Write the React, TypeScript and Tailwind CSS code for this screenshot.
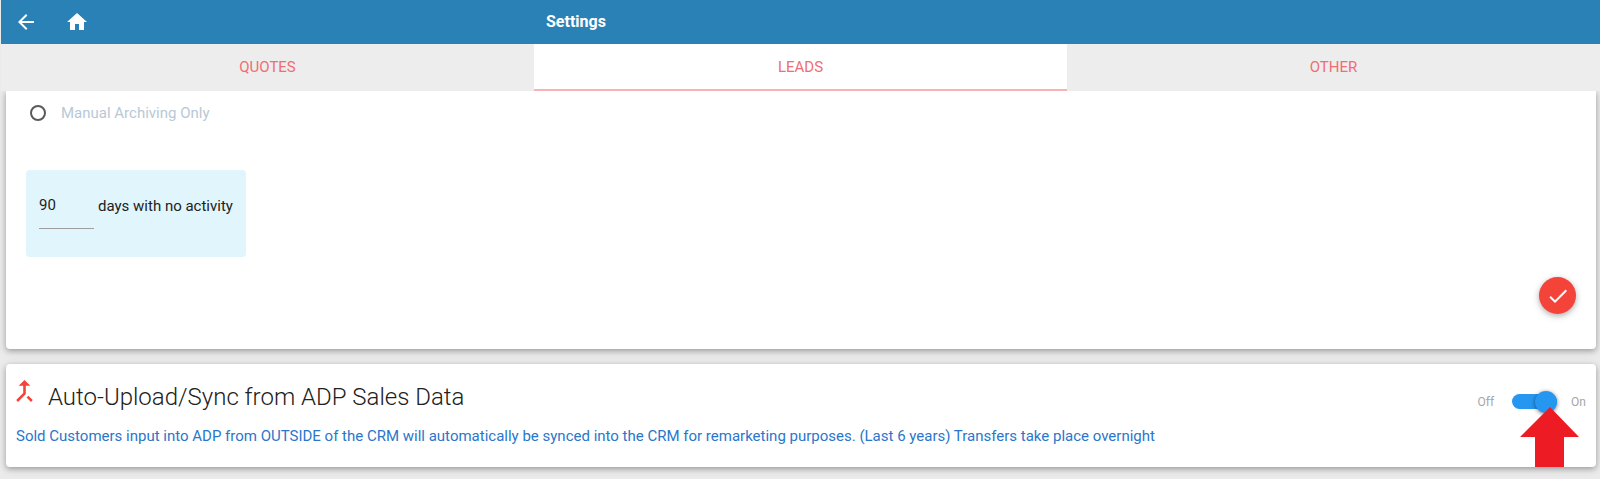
import { useState } from "react";

const tabs = ["Quotes", "Leads", "Other"];

const cardShadow =
  "shadow-[0_2px_5px_0_rgba(0,0,0,0.22),0_2px_10px_0_rgba(0,0,0,0.16)]";

function Header() {
  return (
    <header className="relative z-10 ml-px grid h-11 grid-cols-3 items-center bg-[#2a81b6] text-white">
      <nav className="flex items-center gap-[27px] pl-[13px]">
        <a href="#back" aria-label="Back">
          <svg viewBox="0 0 24 24" className="size-6" fill="currentColor">
            <path d="M20 11H7.83l5.59-5.59L12 4l-8 8 8 8 1.41-1.41L7.83 13H20v-2z" />
          </svg>
        </a>
        <a href="#home" aria-label="Home">
          <svg viewBox="0 0 24 24" className="size-6" fill="currentColor">
            <path d="M10 20v-6h4v6h5v-8h3L12 3 2 12h3v8z" />
          </svg>
        </a>
      </nav>
      <h1 className="pl-3 text-base font-bold">Settings</h1>
    </header>
  );
}

function Tabs({ active, onSelect }: { active: string; onSelect: (tab: string) => void }) {
  return (
    <div role="tablist" className="relative z-10 ml-px grid h-[47px] grid-cols-3">
      {tabs.map((tab) => (
        <button
          key={tab}
          role="tab"
          aria-selected={tab === active}
          onClick={() => onSelect(tab)}
          className={
            tab === active
              ? "border-b-2 border-[#f6b2b5] bg-white pt-0.5 text-[15px] text-[#ee6e73] uppercase"
              : "border-b-2 border-[#ededed] bg-[#ededed] pt-0.5 text-[15px] text-[#ee6e73] uppercase"
          }
        >
          {tab}
        </button>
      ))}
    </div>
  );
}

export default function App() {
  const [active, setActive] = useState("Leads");
  const [days, setDays] = useState("90");
  const [manual, setManual] = useState(false);
  const [sync, setSync] = useState(true);

  return (
    <div className="min-h-screen bg-[#ebebeb] font-['Roboto',sans-serif] text-[15px] text-[#212121]">
      <Header />
      <Tabs active={active} onSelect={setActive} />
      <main className="flex flex-col gap-[15px] pr-1 pb-3 pl-1.5">
        <section className={`rounded-b-sm bg-white px-5 pb-[35px] ${cardShadow}`}>
          <label className="flex h-11 items-center gap-[15px] pl-1 text-[#b8c8d6]">
            <input
              type="radio"
              checked={manual}
              onChange={() => setManual(true)}
              className="size-4 appearance-none rounded-full border-2 border-[#5a5a5a] checked:border-[5px]"
            />
            Manual Archiving Only
          </label>
          <div className="mt-[35px] flex h-[87px] w-[220px] items-start rounded-sm bg-[#e1f5fc] px-[13px]">
            <label className="flex items-start gap-1 whitespace-nowrap">
              <input
                type="text"
                value={days}
                onChange={(e) => setDays(e.target.value)}
                className="mt-3 h-[47px] w-[55px] border-b border-[#9e9e9e] bg-transparent outline-none"
              />
              <span className="mt-6 leading-6">days with no activity</span>
            </label>
          </div>
          <div className="mt-5 flex justify-end">
            <button
              aria-label="Save"
              className="flex size-[37px] items-center justify-center rounded-full bg-[#f44339] text-white shadow-[0_2px_5px_0_rgba(0,0,0,0.2),0_2px_8px_0_rgba(0,0,0,0.14)]"
            >
              <svg viewBox="0 0 24 24" className="size-6" fill="currentColor">
                <path d="M9 16.2L4.8 12l-1.4 1.4L9 19 21 7l-1.4-1.4L9 16.2z" />
              </svg>
            </button>
          </div>
        </section>

        <section className={`relative flex justify-between rounded-sm bg-white px-2.5 pb-[19px] ${cardShadow}`}>
          <div>
            <div className="flex items-start gap-[15px] pt-4">
              <svg viewBox="5.5 3.5 13 17" className="h-[22px] w-[17px] shrink-0 text-[#f44339]" fill="currentColor">
                <path d="M17 20.41L18.41 19 15 15.59 13.59 17 17 20.41zM7.5 8H11v5.59L5.59 19 7 20.41l6-6V8h3.5L12 3.5 7.5 8z" />
              </svg>
              <h2 className="pt-px text-2xl leading-8 font-light">Auto-Upload/Sync from ADP Sales Data</h2>
            </div>
            <p className="mt-3 leading-[23px] text-[#2a76cb]">
              Sold Customers input into ADP from OUTSIDE of the CRM will automatically be synced into the CRM for
              remarketing purposes. (Last 6 years) Transfers take place overnight
            </p>
          </div>
          <label className="flex h-[75px] items-center text-xs text-[#a6a6a6]">
            Off
            <input
              type="checkbox"
              role="switch"
              checked={sync}
              onChange={(e) => setSync(e.target.checked)}
              className="peer sr-only"
            />
            <span className="mr-3.5 ml-[18px] flex h-[15px] w-[45px] items-center justify-start rounded-full bg-[#9e9e9e] peer-checked:justify-end peer-checked:bg-[#2697f0]">
              <span className="size-[22px] rounded-full bg-[#2697f0] shadow-[0_1px_4px_0_rgba(0,0,0,0.5)]" />
            </span>
            On
          </label>
          <svg viewBox="0 0 60 60" className="absolute right-4 bottom-0 size-[60px]" fill="#ed1c24" aria-hidden="true">
            <path d="M30 0L59 30H44V60H15V30H0Z" />
          </svg>
        </section>
      </main>
    </div>
  );
}
